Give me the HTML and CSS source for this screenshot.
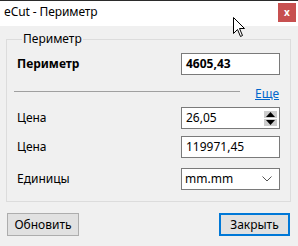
FILE: index.html
```html
<!DOCTYPE html>
<html>
<head>
<meta charset="utf-8">
<link rel="stylesheet" href="styles.css">
</head>
<body>
<div class="window">
  <div class="titlebar">
    <span class="title">eCut - Периметр</span>
    <span class="close">x</span>
  </div>
  <div class="content">
    <fieldset class="group">
      <legend>Периметр</legend>
      <div class="row row-main">
        <span class="label bold">Периметр</span>
        <div class="field bold">4605,43</div>
      </div>
      <div class="sep-row">
        <div class="sep"></div>
        <a class="more">Еще</a>
      </div>
      <div class="row row-price">
        <span class="label">Цена</span>
        <div class="field spin">26,05
          <span class="spinbtns">
            <span class="sb"><svg width="9" height="5" viewBox="0 0 9 5"><path d="M4.5 0 L9 5 L0 5 Z" fill="#000"/></svg></span>
            <span class="sb"><svg width="9" height="5" viewBox="0 0 9 5"><path d="M0 0 L9 0 L4.5 5 Z" fill="#000"/></svg></span>
          </span>
        </div>
      </div>
      <div class="row row-total">
        <span class="label">Цена</span>
        <div class="field">119971,45</div>
      </div>
      <div class="row row-units">
        <span class="label">Единицы</span>
        <div class="field select">mm.mm
          <svg class="chev" width="10" height="6" viewBox="0 0 10 6"><path d="M0.5 0.5 L5 5 L9.5 0.5" fill="none" stroke="#555" stroke-width="1"/></svg>
        </div>
      </div>
    </fieldset>
    <div class="buttons">
      <button class="btn">Обновить</button>
      <button class="btn primary">Закрыть</button>
    </div>
  </div>
</div>
<svg class="cursor" width="13" height="21" viewBox="0 0 13 21"><path d="M0.5 0.5 L0.5 16.5 L4.5 12.5 L7.5 19.5 L9.5 18.5 L6.5 11.5 L11.5 11.5 Z" fill="#fff" stroke="#000" stroke-width="1" stroke-linejoin="miter"/></svg>
</body>
</html>
```
FILE: styles.css
```css
html, body {
  margin: 0;
  padding: 0;
}
body {
  width: 298px;
  height: 246px;
  background: #f0f0f0;
  font-family: "Noto Sans", "DejaVu Sans", sans-serif;
  font-size: 12px;
  color: #000;
  overflow: hidden;
  position: relative;
}
.window {
  display: flex;
  flex-direction: column;
  height: 246px;
}
.titlebar {
  height: 25px;
  border-top: 1px solid #2b2b2b;
  background: #fff;
  display: flex;
  align-items: flex-start;
  justify-content: space-between;
}
.title {
  margin-left: 4px;
  margin-top: 3px;
  font-size: 12px;
  line-height: 16px;
  color: #000;
  letter-spacing: -0.1px;
}
.close {
  width: 18px;
  height: 19px;
  margin-top: 2px;
  margin-right: 2px;
  background: #c75050;
  color: #fff;
  font-weight: bold;
  font-size: 10px;
  line-height: 18px;
  text-align: center;
}
.content {
  padding: 5px 8px 0 6px;
  display: flex;
  flex-direction: column;
}
.group {
  margin: 0;
  border: 1px solid #dcdcdc;
  padding: 6px 10px 11px 10px;
  width: 263px;
}
.group legend {
  padding: 0 1px;
  margin-left: 5px;
  line-height: 16px;
  font-size: 12px;
}
.row {
  display: flex;
  align-items: center;
  justify-content: space-between;
}
.label {
  line-height: 16px;
}
.bold {
  font-weight: bold;
}
.field {
  box-sizing: border-box;
  width: 99px;
  height: 22px;
  border: 1px solid #7a7a7a;
  background: #fff;
  padding: 0 4px;
  line-height: 20px;
  display: flex;
  align-items: center;
  justify-content: space-between;
}
.sep-row {
  display: flex;
  align-items: center;
  margin: 8px 0 0 -3px;
  height: 16px;
}
.sep {
  flex: 0 0 226px;
  height: 1px;
  background: #a0a0a0;
}
.more {
  margin-left: 15px;
  color: #0066cc;
  text-decoration: underline;
  line-height: 16px;
  position: relative;
  top: 3px;
}
.row-price {
  margin-top: 8px;
}
.spin {
  padding-right: 2px;
}
.spinbtns {
  display: flex;
  flex-direction: column;
  gap: 1px;
}
.sb {
  width: 13px;
  height: 7px;
  background: #cdcdcd;
  display: flex;
  align-items: center;
  justify-content: center;
}
.row-total {
  margin-top: 7px;
}
.row-units {
  margin-top: 10px;
}
.select {
  padding-left: 3px;
  padding-right: 7px;
}
.buttons {
  display: flex;
  justify-content: space-between;
  margin-top: 11px;
  padding-left: 1px;
}
.btn {
  font-family: "Noto Sans", "DejaVu Sans", sans-serif;
  font-size: 12px;
  height: 23px;
  width: 72px;
  padding: 0;
  background: #e1e1e1;
  border: 1px solid #adadad;
  color: #000;
  line-height: 19px;
}
.btn.primary {
  width: 71px;
  border: 2px solid #0078d7;
}
.cursor {
  position: absolute;
  left: 233px;
  top: 17px;
}
```
